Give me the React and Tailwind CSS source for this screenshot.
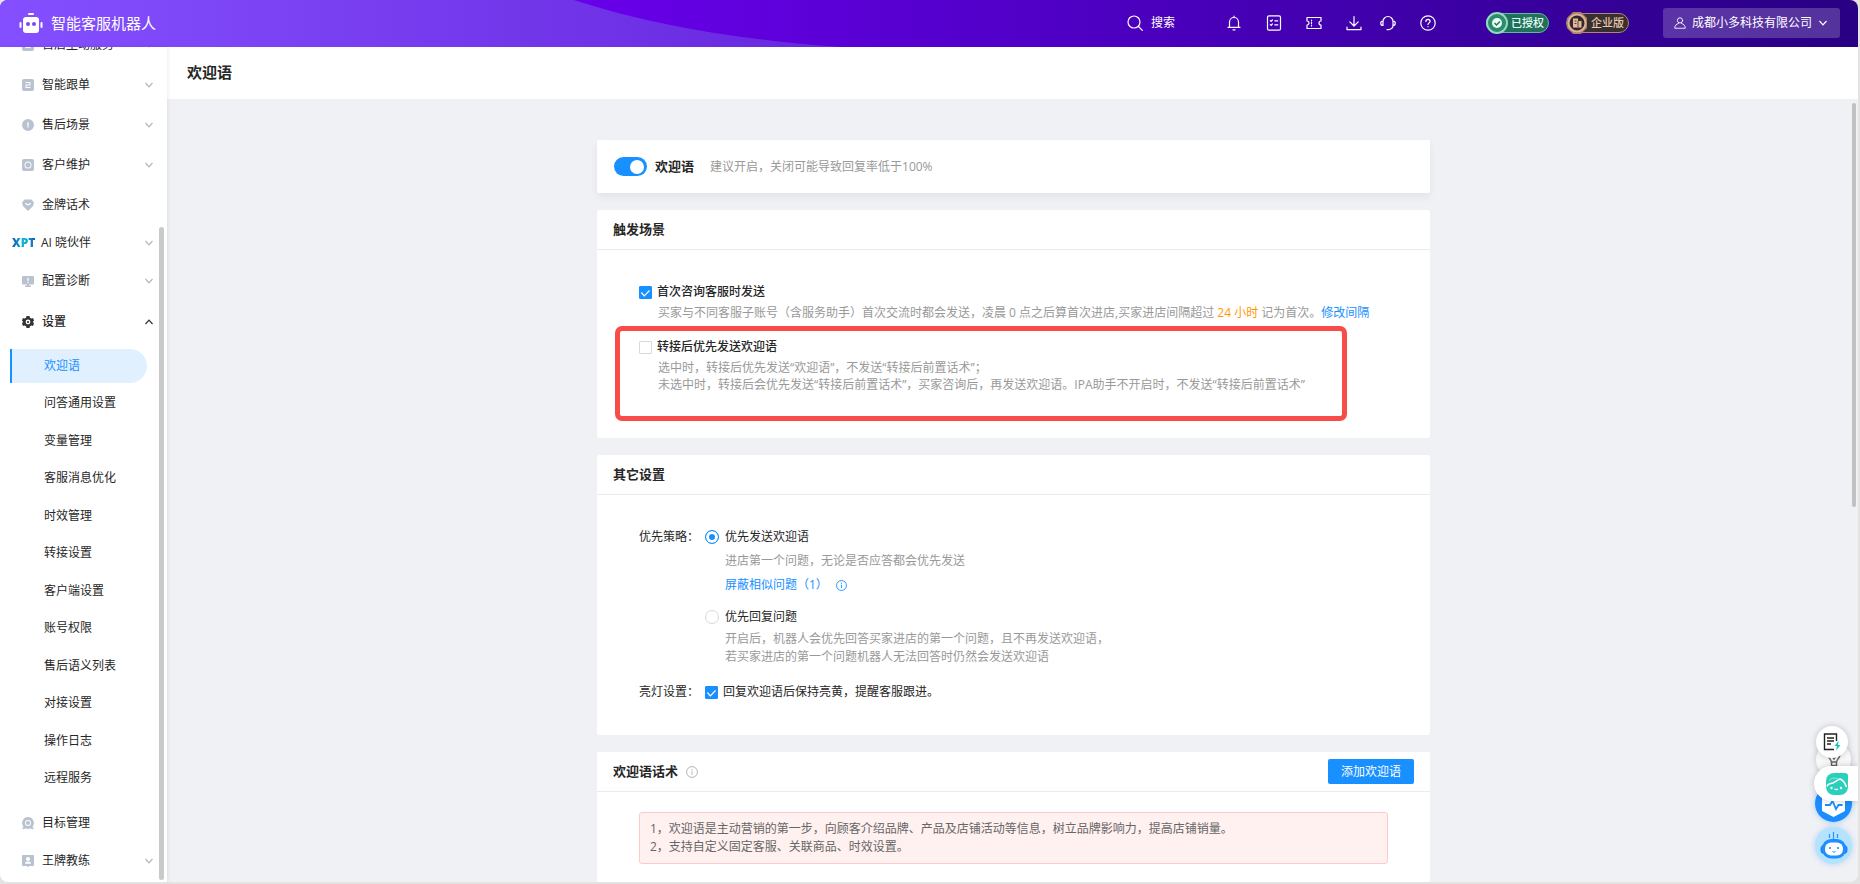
import { useState } from "react";

const PATHS = {
  doc: "M2 0h8a2 2 0 012 2v8a2 2 0 01-2 2H2a2 2 0 01-2-2V2a2 2 0 012-2zm1.500 3v1h4v1.500h-4V9h5V8h-4V6.500h4V3z",
  coin: "M6 0a6 6 0 110 12A6 6 0 016 0zM5 3.500v1.200h.4V8.500h1.200v-5z",
  ring: "M2 0h8a2 2 0 012 2v8a2 2 0 01-2 2H2a2 2 0 01-2-2V2a2 2 0 012-2zm4 2.500a3.500 3.500 0 100 7 3.500 3.500 0 000-7zm0 .9a2.600 2.600 0 110 5.200 2.600 2.600 0 010-5.200z",
  gem: "M2.500 .5h7L12 3.500 11 7l-5 5-5-5-1-3.500zM3 4v1l3 1.500L9 5V4L6 5z",
  monitor: "M1 1h10a1 1 0 011 1v6.500a1 1 0 01-1 1H7v1h2V12H3v-1.500h2v-1H1a1 1 0 01-1-1V2a1 1 0 011-1zm4.400 1.800V6h1.200V2.800zm0 4v1.100h1.200V6.800z",
  gear: "M4.500 0h3l.4 1.700 1.500.9L11 2l1 2.400L10.900 6 12 7.600 11 10l-1.600-.6-1.500.9L7.500 12h-3l-.4-1.700-1.500-.9L1 10 0 7.600 1.100 6 0 4.400 1 2l1.600.6 1.500-.9zM6 3.600a2.400 2.400 0 100 4.800 2.400 2.400 0 000-4.800zm0 1.300a1.100 1.100 0 110 2.200 1.100 1.100 0 010-2.200z",
  target: "M6 0a6 6 0 014.500 9.800L12 12H9.500L8.700 11.300a6 6 0 01-5.400 0L2.500 12H0l1.500-2.200A6 6 0 016 0zm0 3a3 3 0 100 6 3 3 0 000-6zm0 .9a2.100 2.100 0 110 4.200 2.100 2.100 0 010-4.200z",
  person: "M1 0h10a1 1 0 011 1v9a1 1 0 01-1 1H7.500L6 12l-1.500-1H1a1 1 0 01-1-1V1a1 1 0 011-1zm5 2a2 2 0 100 4 2 2 0 000-4zM3 8.800h6C9 7.300 7.800 6.600 6 6.600S3 7.300 3 8.800z",
};

const TOP_MENU = [
  { icon: "doc", label: "售后主动服务", arrow: true },
  { icon: "doc", label: "智能跟单", arrow: true },
  { icon: "coin", label: "售后场景", arrow: true },
  { icon: "ring", label: "客户维护", arrow: true },
  { icon: "gem", label: "金牌话术", arrow: false },
];

const SETTINGS_MENU = [
  "欢迎语",
  "问答通用设置",
  "变量管理",
  "客服消息优化",
  "时效管理",
  "转接设置",
  "客户端设置",
  "账号权限",
  "售后语义列表",
  "对接设置",
  "操作日志",
  "远程服务",
];

const MenuIcon = ({ name, className }) => (
  <svg className={className} viewBox="0 0 12 12" fill="currentColor" fillRule="evenodd">
    <path d={PATHS[name]} />
  </svg>
);

const Chevron = ({ className }) => (
  <svg className={className} viewBox="0 0 10 10" fill="none" stroke="currentColor" strokeWidth="1.2">
    <path d="M1.500 3L5 6.800 8.500 3" />
  </svg>
);

const InfoIcon = ({ className }) => (
  <svg className={className} viewBox="0 0 12 12" fill="none" stroke="currentColor" strokeWidth="1">
    <circle cx="6" cy="6" r="5.400" />
    <path d="M6 5.200v3.600M6 3v1.200" />
  </svg>
);

const LineIcon = ({ className, children }) => (
  <svg
    className={className}
    viewBox="0 0 16 16"
    fill="none"
    stroke="currentColor"
    strokeWidth="1.2"
    strokeLinecap="round"
    strokeLinejoin="round"
  >
    {children}
  </svg>
);

const IconButton = ({ label, children }) => (
  <button type="button" aria-label={label} className="flex size-6 items-center justify-center">
    <LineIcon className="size-4">{children}</LineIcon>
  </button>
);

function Header() {
  return (
    <header className="relative flex h-[47px] shrink-0 items-center bg-linear-to-r from-[#6a00ec] from-30% via-[#4f00c5] via-57% to-[#290083] pr-[18px] pb-px pl-[19px] text-white">
      <svg className="absolute top-0 left-0 h-[47px] w-[840px]" viewBox="0 0 840 47">
        <defs>
          <linearGradient id="swoosh" x1="0" x2="1">
            <stop offset="0" stopColor="#8450ff" />
            <stop offset="1" stopColor="#6827dd" />
          </linearGradient>
        </defs>
        <path fill="url(#swoosh)" d="M0 0H574C640 22 735 40 840 47H0z" />
      </svg>

      <div className="relative flex flex-1 items-center gap-2">
        <svg className="h-5 w-6" viewBox="0 0 24 20" fill="#fff">
          <rect x="9" y="0" width="6" height="2" rx="1" />
          <rect x="0.500" y="9" width="2" height="6" rx="1" />
          <rect x="21.500" y="9" width="2" height="6" rx="1" />
          <rect x="4" y="4" width="16" height="16" rx="3" />
          <circle cx="9" cy="11" r="2" fill="#7c45f8" />
          <circle cx="15" cy="11" r="2" fill="#7c45f8" />
        </svg>
        <span className="text-[15px] leading-5">智能客服机器人</span>
      </div>

      <button type="button" className="relative mr-[47px] flex items-center gap-2 text-xs">
        <LineIcon className="size-4">
          <circle cx="7" cy="7" r="6" />
          <path d="M11.500 11.500L15.300 15.300" />
        </LineIcon>
        搜索
      </button>

      <div className="mr-[46px] flex items-center gap-4">
        <IconButton label="通知">
          <path d="M3.500 12V7a4.500 4.500 0 019 0v5M2 12.300h12M8 1.200v1M7 14.800h2" />
        </IconButton>
        <IconButton label="任务">
          <rect x="1.500" y="0.800" width="13" height="14.400" rx="1.500" />
          <path d="M4.300 5.600l.8.8 1.300-1.400M8.800 5.800h3M4.300 9.600l.8.8 1.300-1.400M8.800 9.800h3" />
        </IconButton>
        <IconButton label="卡券">
          <path d="M1 2.500h14v3.500a2 2 0 000 4v3.500H1v-3.500a2 2 0 000-4zM5.500 5v1M5.500 7.500v1M5.500 10v1" />
        </IconButton>
        <div className="flex items-center gap-2.5">
          <IconButton label="下载">
            <path d="M8 1.500v9M3.800 6.800L8 11l4.200-4.200M1 12v2.600h14V12" />
          </IconButton>
          <IconButton label="客服">
            <path d="M3 10.500V6.500a5 5 0 0110 0v4c0 2-1.500 3.500-4 4M3 6a2.200 2.200 0 000 4.500M13 6a2.200 2.200 0 010 4.500M7 14.600h2" />
          </IconButton>
        </div>
        <IconButton label="帮助">
          <circle cx="8" cy="8" r="7.200" />
          <path d="M5.900 6.400a2.100 2.100 0 114.200 0c0 1.400-2.100 1.600-2.100 3.100M8 11.500v.2" />
        </IconButton>
      </div>

      <div className="mr-[34px] flex items-center gap-[17px]">
        <div className="flex h-5 w-[63px] items-center rounded-full border border-[#5fbb9a] bg-[#20705a] text-[11px] font-medium leading-4 text-[#e3fff3]">
          <svg className="-ml-px size-[22px] shrink-0" viewBox="0 0 22 22">
            <circle cx="11" cy="11" r="10" fill="#2e8a6c" stroke="#8fdcba" strokeWidth="2" />
            <circle cx="11" cy="11" r="5" fill="#e9fff6" />
            <path d="M8.500 11l2 2 3.500-3.500" fill="none" stroke="#23765d" strokeWidth="1.500" />
          </svg>
          <span className="ml-[3px] whitespace-nowrap">已授权</span>
        </div>
        <div className="flex h-5 w-[63px] items-center rounded-full border border-[#b08771] bg-[#37302f] text-[11px] font-medium leading-4 text-[#e8c5ae]">
          <svg className="-ml-px size-[22px] shrink-0" viewBox="0 0 22 22">
            <path d="M7 0h8l6 6v10l-6 6H7l-6-6V6z" fill="#a87f68" />
            <circle cx="11" cy="11" r="8.500" fill="#35292a" stroke="#dfb396" strokeWidth="2" />
            <path d="M7 6.500h5V9h3.500v6.500H7z" fill="#e3b99e" />
            <path d="M8.500 9h2M8.500 11.500h2M12 9v6" stroke="#5b4238" />
          </svg>
          <span className="ml-[3px] whitespace-nowrap">企业版</span>
        </div>
      </div>

      <button
        type="button"
        className="flex h-[30px] w-[177px] items-center justify-between rounded-[3px] bg-white/20 pr-3 pl-[11px] text-xs"
      >
        <LineIcon className="size-3">
          <circle cx="8" cy="4.500" r="3.500" />
          <path d="M6 8.500C3 9.500 1 11.500 1 15h14c0-3.500-2-5.500-5-6.500" />
        </LineIcon>
        成都小多科技有限公司
        <Chevron className="size-[10px]" />
      </button>
    </header>
  );
}

function MenuRow({ icon, label, arrow }) {
  return (
    <a href="#" className="flex min-h-[38px] flex-1 items-center gap-2 pr-[13px] pl-[22px]">
      <MenuIcon name={icon} className="size-3 text-[#b9c3d0]" />
      <span className="flex-1">{label}</span>
      {arrow && <Chevron className="size-[10px] text-[#b5b5b5]" />}
    </a>
  );
}

function Sidebar() {
  const [active, setActive] = useState("欢迎语");

  return (
    <aside className="relative z-10 w-[167px] shrink-0 overflow-hidden bg-white text-xs text-[#262626] shadow-[1px_0_4px_rgba(0,0,0,0.08)]">
      <nav className="-mt-[22px] flex flex-col">
        <div className="flex h-[200px] shrink-0 flex-col">
          {TOP_MENU.map((item) => (
            <MenuRow key={item.label} {...item} />
          ))}
        </div>
        <a href="#" className="flex h-9 shrink-0 items-center gap-[5px] pr-[13px] pl-3">
          <span className="w-6 bg-linear-to-r from-[#1556b8] via-[#12bcd8] to-[#1556b8] bg-clip-text text-xs font-extrabold text-transparent">
            XPT
          </span>
          <span className="flex-1">AI 晓伙伴</span>
          <Chevron className="size-[10px] text-[#b5b5b5]" />
        </a>
        <div className="flex h-10 shrink-0 flex-col">
          <MenuRow icon="monitor" label="配置诊断" arrow />
        </div>
        <a href="#" className="flex h-[42px] shrink-0 items-center gap-2 pr-[13px] pl-[22px] font-medium">
          <MenuIcon name="gear" className="size-3 text-[#333]" />
          <span className="flex-1">设置</span>
          <Chevron className="size-[10px] rotate-180 text-[#333]" />
        </a>

        <ul className="mt-1 mb-[7px] flex h-[450px] shrink-0 flex-col pr-5 pl-[10px]">
          {SETTINGS_MENU.map((label) => (
            <li key={label} className="flex flex-1 items-center">
              <a
                href="#"
                onClick={() => setActive(label)}
                className={
                  active === label
                    ? "flex h-[34px] flex-1 items-center rounded-r-full border-l-2 border-[#1890ff] bg-[#e1f0ff] pl-8 text-[#1890ff]"
                    : "flex h-[34px] flex-1 items-center border-l-2 border-transparent pl-8"
                }
              >
                {label}
              </a>
            </li>
          ))}
        </ul>

        <div className="flex h-[76px] shrink-0 flex-col">
          <MenuRow icon="target" label="目标管理" />
          <MenuRow icon="person" label="王牌教练" arrow />
        </div>
      </nav>
      <div className="absolute top-[180px] right-[3px] bottom-0.5 w-[5px] rounded-full bg-[#c9c9c9]" />
    </aside>
  );
}

const Checkbox = ({ id, checked, onChange }) => (
  <span className="grid size-[13px] shrink-0">
    <input
      id={id}
      type="checkbox"
      checked={checked}
      onChange={onChange}
      className="col-start-1 row-start-1 size-[13px] appearance-none rounded-[1px] border border-[#d9d9d9] bg-white checked:border-[#1890ff] checked:bg-[#1890ff]"
    />
    {checked && (
      <svg
        className="pointer-events-none col-start-1 row-start-1 size-[13px]"
        viewBox="0 0 13 13"
        fill="none"
        stroke="#fff"
        strokeWidth="1.2"
      >
        <path d="M2.300 6.500l3 3.300 5.200-5.300" />
      </svg>
    )}
  </span>
);

const Radio = ({ id, checked, onChange }) => (
  <input
    id={id}
    type="radio"
    name="strategy"
    checked={checked}
    onChange={onChange}
    className="size-[14px] shrink-0 appearance-none rounded-full border border-[#d9d9d9] bg-white checked:border-[#1890ff] checked:bg-[#1890ff] checked:shadow-[inset_0_0_0_3px_#fff]"
  />
);

const CardTitle = ({ children }) => (
  <div className="flex h-10 items-center border-b border-[#ebebeb] px-4">{children}</div>
);

function TriggerCard() {
  const [first, setFirst] = useState(true);
  const [transfer, setTransfer] = useState(false);

  return (
    <section className="rounded-[2px] bg-white pb-[17px]">
      <CardTitle>
        <h2 className="text-[13px] font-bold">触发场景</h2>
      </CardTitle>
      <div className="px-[42px] pt-8 pb-1">
        <div className="flex h-5 items-center gap-[5px]">
          <Checkbox id="first" checked={first} onChange={() => setFirst(!first)} />
          <label htmlFor="first" className="font-medium">
            首次咨询客服时发送
          </label>
        </div>
        <p className="pt-0.5 pl-[19px] leading-[18px] whitespace-nowrap text-[#999]">
          买家与不同客服子账号（含服务助手）首次交流时都会发送，凌晨 0 点之后算首次进店,买家进店间隔超过{" "}
          <span className="text-[#ff9800]">24 小时</span> 记为首次。
          <a href="#" className="text-[#1890ff]">
            修改间隔
          </a>
        </p>
      </div>
      <div className="mr-[83px] ml-[18px] h-[95px] rounded-[7px] border-[5px] border-[#f74c48] pt-[6px] pl-[19px]">
        <div className="flex h-5 items-center gap-[5px]">
          <Checkbox id="transfer" checked={transfer} onChange={() => setTransfer(!transfer)} />
          <label htmlFor="transfer" className="font-medium">
            转接后优先发送欢迎语
          </label>
        </div>
        <p className="pt-0.5 pl-[19px] leading-[17px] whitespace-nowrap text-[#999]">
          选中时，转接后优先发送“欢迎语”，不发送“转接后前置话术”；
          <br />
          未选中时，转接后会优先发送“转接后前置话术”，买家咨询后，再发送欢迎语。IPA助手不开启时，不发送“转接后前置话术”
        </p>
      </div>
    </section>
  );
}

function OtherCard() {
  const [strategy, setStrategy] = useState("send");
  const [light, setLight] = useState(true);

  return (
    <section className="rounded-[2px] bg-white pb-[33px]">
      <CardTitle>
        <h2 className="text-[13px] font-bold">其它设置</h2>
      </CardTitle>
      <div className="px-[42px] pt-8">
        <div className="flex">
          <span className="w-[66px] shrink-0 leading-5">优先策略：</span>
          <div>
            <div className="flex h-5 items-center gap-1.5">
              <Radio id="send" checked={strategy === "send"} onChange={() => setStrategy("send")} />
              <label htmlFor="send">优先发送欢迎语</label>
            </div>
            <div className="pl-5">
              <p className="mt-1 leading-5 text-[#999]">进店第一个问题，无论是否应答都会优先发送</p>
              <div className="mt-1 flex h-5 items-center gap-2 text-[#1890ff]">
                <a href="#">屏蔽相似问题（1）</a>
                <InfoIcon className="size-[11px]" />
              </div>
            </div>
            <div className="mt-3 flex h-5 items-center gap-1.5">
              <Radio id="reply" checked={strategy === "reply"} onChange={() => setStrategy("reply")} />
              <label htmlFor="reply">优先回复问题</label>
            </div>
            <p className="mt-[3px] pl-5 leading-[18px] text-[#999]">
              开启后，机器人会优先回答买家进店的第一个问题，且不再发送欢迎语，
              <br />
              若买家进店的第一个问题机器人无法回答时仍然会发送欢迎语
            </p>
          </div>
        </div>
        <div className="mt-4 flex h-5 items-center">
          <span className="w-[66px]">亮灯设置：</span>
          <div className="flex items-center gap-[5px]">
            <Checkbox id="light" checked={light} onChange={() => setLight(!light)} />
            <label htmlFor="light">回复欢迎语后保持亮黄，提醒客服跟进。</label>
          </div>
        </div>
      </div>
    </section>
  );
}

function ScriptCard() {
  return (
    <section className="rounded-[2px] bg-white pb-10">
      <CardTitle>
        <h2 className="text-[13px] font-bold">欢迎语话术</h2>
        <InfoIcon className="ml-2 size-3 text-[#b5b5b5]" />
        <button type="button" className="ml-auto h-[25px] w-[86px] rounded-[2px] bg-[#1890ff] text-white">
          添加欢迎语
        </button>
      </CardTitle>
      <div className="mx-[42px] mt-5 rounded-[3px] border border-[#ffc9c7] bg-[#fff1f0] px-2.5 py-[7px] leading-[18px] text-[#666]">
        <p>1，欢迎语是主动营销的第一步，向顾客介绍品牌、产品及店铺活动等信息，树立品牌影响力，提高店铺销量。</p>
        <p>2，支持自定义固定客服、关联商品、时效设置。</p>
      </div>
    </section>
  );
}

function FloatingTools() {
  return (
    <div className="absolute right-0 bottom-[18px] z-20 flex flex-col items-end">
      <button type="button" aria-label="表单" className="relative z-10 mr-[10px] flex size-8 items-center justify-center rounded-full bg-white shadow-[0_0_6px_rgba(0,0,0,0.2)]">
        <svg className="h-[18px] w-[18px]" viewBox="0 0 18 18" fill="none" stroke="#222" strokeWidth="1.400">
          <path d="M13.500 8V1H1.500v15.500H11M4 5h7M4 8h7M4 11h4" />
          <path d="M15.500 8l-4 5h2.500l-1 4.500 4.500-5.500H15z" fill="#12c9b3" stroke="none" />
        </svg>
      </button>
      <button type="button" aria-label="提示" className="-mt-4 mr-[7px] flex size-[35px] items-center justify-center rounded-full bg-[#f8f8f8] shadow-[0_0_6px_rgba(0,0,0,0.2)]">
        <svg className="h-4 w-[14px]" viewBox="0 0 14 16" fill="none" stroke="#666" strokeWidth="1.500">
          <path d="M1 2c0 4 3 5 3.500 8M13 2c0 4-3 5-3.500 8M5 4l2 3 2-3M5 4h4M4.500 10h5v3.500h-5z" />
        </svg>
      </button>
      <button type="button" aria-label="助手" className="relative z-10 -mt-[11px] flex h-[35px] w-[44px] items-center rounded-l-full bg-white pl-3 shadow-[0_0_6px_rgba(0,0,0,0.2)]">
        <svg className="size-[22px]" viewBox="0 0 22 22" fill="none">
          <path d="M8 0h11a3 3 0 013 3v11a8 8 0 01-8 8H8a8 8 0 01-8-8V8a8 8 0 018-8z" fill="#2bd0bd" />
          <path d="M1 13.500C2 10 4 11 7 10c3-1.500 5-3.500 7-4 3 1 5 4 6.500 8" stroke="#fff" strokeWidth="1.500" />
          <path d="M13 6.500c-3-2-7-2-10 1" stroke="#8fe9df" />
          <circle cx="5.500" cy="15" r="1.200" fill="#fff" />
          <circle cx="15" cy="15" r="1.200" fill="#fff" />
          <path d="M8.500 16q1.700 1.200 3.400 0" stroke="#fff" strokeWidth="1.200" />
        </svg>
      </button>
      <button type="button" aria-label="诊断" className="-mt-4 mr-1.5 size-[37px] rounded-full bg-[#1b8dff] shadow-[0_0_6px_rgba(24,144,255,0.4)]">
        <svg className="size-[37px]" viewBox="0 0 37 37">
          <path d="M7 12h23v14l-11.500 6L7 26z" fill="#fff" />
          <path d="M10 20h5l2.500-4 3.500 8 2.500-4h4" fill="none" stroke="#1b8dff" strokeWidth="1.800" />
        </svg>
      </button>
      <button type="button" aria-label="机器人" className="mt-[5px] mr-1.5 size-[37px] rounded-full bg-[#b5e2ff] shadow-[0_0_6px_rgba(24,144,255,0.3)]">
        <svg className="size-[37px]" viewBox="0 0 37 37">
          <path d="M14.500 7v4M18.500 5v7M22.500 7v4" stroke="#2a93ff" strokeWidth="1.200" />
          <rect x="5.500" y="18" width="27" height="9" rx="4" fill="#1683f5" />
          <rect x="7" y="12" width="24" height="19.500" rx="9" fill="#1e8fff" />
          <rect x="10" y="15.500" width="18" height="13" rx="6" fill="#fff" />
          <circle cx="15" cy="21" r="1.100" fill="#1e8fff" />
          <circle cx="23" cy="21" r="1.100" fill="#1e8fff" />
          <path d="M17.500 24.500q1.500 1.500 3 0" fill="none" stroke="#1e8fff" />
        </svg>
      </button>
    </div>
  );
}

export default function App() {
  const [enabled, setEnabled] = useState(true);

  return (
    <div className="h-screen bg-[#e3e3e3] pr-0.5 pb-0.5 font-['Open_Sans','Noto_Sans_CJK_SC',sans-serif] text-xs text-[#262626]">
      <div className="relative flex h-full flex-col overflow-hidden rounded-lg bg-[#f0f1f5]">
        <Header />
        <div className="flex min-h-0 flex-1">
          <Sidebar />
          <main className="flex min-w-0 flex-1 flex-col">
            <h1 className="flex h-[52px] shrink-0 items-center bg-white px-5 pb-0.5 text-[15px] font-bold">欢迎语</h1>
            <div className="relative min-h-0 flex-1 overflow-hidden pl-0.5">
              <div className="mx-auto mt-[41px] flex max-w-[833px] flex-col gap-[17px]">
                <section className="flex h-[53px] items-center rounded-[2px] bg-white px-[17px] shadow-[0_4px_8px_rgba(0,0,0,0.06)]">
                  <button
                    type="button"
                    role="switch"
                    aria-checked={enabled}
                    aria-label="欢迎语"
                    onClick={() => setEnabled(!enabled)}
                    className="flex h-[19px] w-[33px] items-center justify-end rounded-full bg-[#bfbfbf] px-[3px] aria-checked:bg-[#1890ff]"
                  >
                    <span className="size-[14px] rounded-full bg-white" />
                  </button>
                  <span className="ml-2 text-[13px] font-bold">欢迎语</span>
                  <span className="ml-4 text-[#999]">建议开启，关闭可能导致回复率低于100%</span>
                </section>
                <TriggerCard />
                <OtherCard />
                <ScriptCard />
              </div>
              <div className="absolute top-1 right-0.5 h-[404px] w-1 rounded-full bg-[#c1c1c1]" />
            </div>
          </main>
        </div>
        <FloatingTools />
      </div>
    </div>
  );
}
